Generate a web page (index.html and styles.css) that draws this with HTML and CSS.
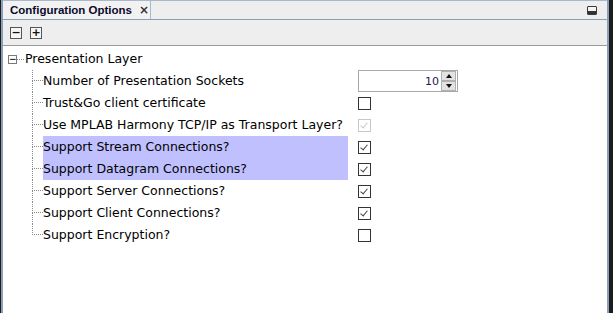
FILE: index.html
```html
<!DOCTYPE html>
<html lang="en">
<head>
    <meta charset="UTF-8">
    <title>Configuration Options</title>
    <link rel="stylesheet" href="styles.css">
</head>
<body>
    <div class="window">
        <header class="tabbar">
            <div class="tab">
                <span class="tab-title">Configuration Options</span>
                <span class="tab-close">&times;</span>
            </div>
            <div class="tabbar-fill">
                <span class="minimize"></span>
            </div>
        </header>

        <div class="toolbar">
            <span class="tool-btn">&minus;</span>
            <span class="tool-btn">+</span>
        </div>

        <div class="tree">
            <div class="row root">
                <span class="expander">&minus;</span>
                <span class="root-dots"></span>
                <span class="label">Presentation Layer</span>
            </div>

            <div class="row">
                <span class="connector"><i class="top"></i><i class="bottom"></i></span>
                <span class="label">Number of Presentation Sockets</span>
                <span class="value">
                    <span class="spinner">
                        <span class="spinner-text">10</span>
                        <span class="spinner-btns">
                            <span class="spin up"></span>
                            <span class="spin down"></span>
                        </span>
                    </span>
                </span>
            </div>

            <div class="row">
                <span class="connector"><i class="top"></i><i class="bottom"></i></span>
                <span class="label">Trust&amp;Go client certificate</span>
                <span class="value"><span class="checkbox"></span></span>
            </div>

            <div class="row">
                <span class="connector"><i class="top"></i><i class="bottom"></i></span>
                <span class="label">Use MPLAB Harmony TCP/IP as Transport Layer?</span>
                <span class="value"><span class="checkbox checked disabled"></span></span>
            </div>

            <div class="row">
                <span class="connector"><i class="top"></i><i class="bottom"></i></span>
                <span class="label selected">Support Stream Connections?</span>
                <span class="value"><span class="checkbox checked"></span></span>
            </div>

            <div class="row">
                <span class="connector"><i class="top"></i><i class="bottom"></i></span>
                <span class="label selected">Support Datagram Connections?</span>
                <span class="value"><span class="checkbox checked"></span></span>
            </div>

            <div class="row">
                <span class="connector"><i class="top"></i><i class="bottom"></i></span>
                <span class="label">Support Server Connections?</span>
                <span class="value"><span class="checkbox checked"></span></span>
            </div>

            <div class="row">
                <span class="connector"><i class="top"></i><i class="bottom"></i></span>
                <span class="label">Support Client Connections?</span>
                <span class="value"><span class="checkbox checked"></span></span>
            </div>

            <div class="row">
                <span class="connector last"><i class="top"></i><i class="bottom"></i></span>
                <span class="label">Support Encryption?</span>
                <span class="value"><span class="checkbox"></span></span>
            </div>
        </div>
    </div>
</body>
</html>
```

FILE: styles.css
```css
/* page */
body {
    margin: 0;
    padding: 0;
    background-color: #1c1c1c;
    font-family: 'DejaVu Sans', sans-serif;
    color: #000000;
    width: 613px;
    height: 313px;
    overflow: hidden;
}

.window {
    width: 604px;
    height: 313px;
    margin-left: 1px;
    border-left: 2px solid #8a9fb8;
    border-right: 2px solid #8a9fb8;
    background-color: #ffffff;
    display: flex;
    flex-direction: column;
}

/* tab header */
.tabbar {
    height: 18px;
    border-top: 1px solid #a9b8ca;
    border-bottom: 1px solid #8a9fb8;
    background-color: #eeeeee;
    display: flex;
}

.tab {
    width: 148px;
    border-right: 1px solid #a9b8ca;
    background-color: #f2f2f2;
    display: flex;
    align-items: center;
    padding-left: 7px;
    box-sizing: border-box;
    white-space: nowrap;
}

.tab-title {
    font-family: 'Liberation Sans', sans-serif;
    font-weight: bold;
    font-size: 11.5px;
    color: #0a0a2a;
}

.tab-close {
    margin-left: 7px;
    font-weight: bold;
    font-size: 12px;
    color: #333333;
}

.tabbar-fill {
    flex: 1;
    display: flex;
    justify-content: flex-end;
    align-items: center;
    padding-right: 10px;
}

.minimize {
    width: 8px;
    height: 7px;
    border: 1px solid #3a3a3a;
    background-color: #f4f4f4;
    box-shadow: inset 0 -3px 0 #333333, inset 0 -4px 0 #f4f4f4;
    border-radius: 1px;
}

/* toolbar */
.toolbar {
    height: 25px;
    border-bottom: 1px solid #9a9a9a;
    background-color: #eeeeee;
    display: flex;
    align-items: center;
    gap: 8px;
    padding-left: 7px;
}

.tool-btn {
    width: 10px;
    height: 10px;
    border: 1px solid #555555;
    background-color: #f6f6f6;
    font-size: 11px;
    font-weight: bold;
    line-height: 10px;
    text-align: center;
    color: #111111;
}

/* tree */
.tree {
    padding-top: 2px;
    font-size: 12.5px;
}

.row {
    height: 22px;
    display: flex;
    align-items: center;
    padding-left: 29px;
}

.row.root {
    padding-left: 5px;
}

.expander {
    width: 7px;
    height: 7px;
    border: 1px solid #7a7a7a;
    font-size: 9px;
    line-height: 6px;
    text-align: center;
    color: #333333;
    font-weight: bold;
}

.root-dots {
    width: 7px;
    margin-right: 1px;
    border-top: 1px dotted #8a8a8a;
}

.connector {
    width: 11px;
    height: 22px;
    display: flex;
    flex-direction: column;
}

.connector i {
    display: block;
    height: 11px;
    box-sizing: border-box;
    border-left: 1px dotted #8a8a8a;
}

.connector .top {
    border-bottom: 1px dotted #8a8a8a;
}

.connector.last .bottom {
    border-left: none;
}

.label {
    width: 305px;
    height: 22px;
    line-height: 22px;
    white-space: nowrap;
}

.label.selected {
    background-color: #c0c0ff;
}

.value {
    margin-left: 10px;
    display: flex;
    align-items: center;
}

/* checkbox */
.checkbox {
    width: 11px;
    height: 11px;
    border: 1px solid #333333;
    background-color: #ffffff;
    position: relative;
}

.checkbox.checked::after {
    content: "";
    position: absolute;
    left: 3px;
    top: 1px;
    width: 3px;
    height: 6px;
    border-right: 1px solid #444444;
    border-bottom: 1px solid #444444;
    transform: rotate(40deg);
}

.checkbox.disabled {
    border-color: #c8c8c8;
}

.checkbox.disabled::after {
    border-color: #c8c8c8;
}

/* spinner */
.spinner {
    width: 98px;
    height: 20px;
    border: 1px solid #a8a8a8;
    display: flex;
    align-items: center;
    background-color: #ffffff;
}

.spinner-text {
    flex: 1;
    text-align: right;
    font-size: 11px;
    color: #1a1a50;
    padding-right: 2px;
}

.spinner-btns {
    width: 15px;
    height: 20px;
    display: flex;
    flex-direction: column;
    margin-right: 1px;
}

.spin {
    flex: 1;
    background-color: #e2e2e2;
    border: 1px solid #b0b0b0;
    display: flex;
    align-items: center;
    justify-content: center;
}

.spin::before {
    content: "";
    border-left: 3px solid transparent;
    border-right: 3px solid transparent;
}

.spin.up::before {
    border-bottom: 4px solid #111111;
}

.spin.down::before {
    border-top: 4px solid #111111;
}
```
